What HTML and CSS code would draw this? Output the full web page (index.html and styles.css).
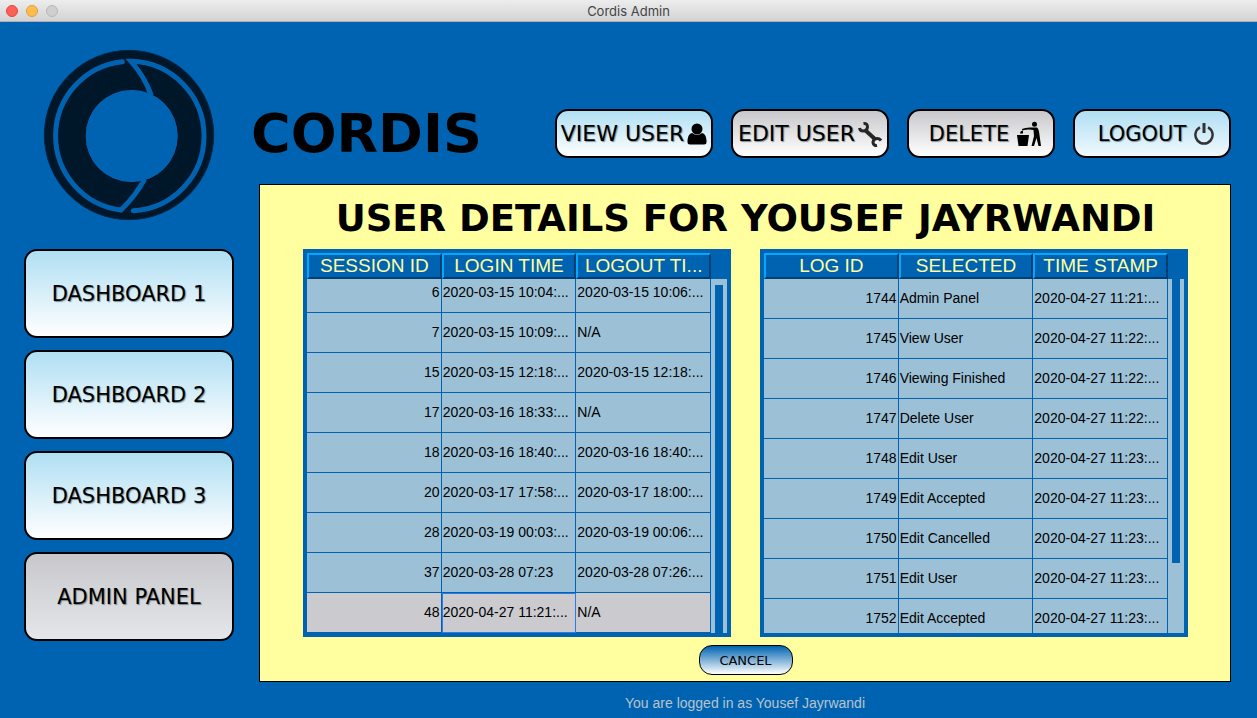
FILE: index.html
```html
<!DOCTYPE html>
<html lang="en">
<head>
<meta charset="utf-8">
<title>Cordis Admin</title>
<link rel="stylesheet" href="styles.css">
</head>
<body>
<div class="titlebar">
  <div class="lights"><span class="light red"></span><span class="light amber"></span><span class="light off"></span></div>
  <span class="window-title">Cordis Admin</span>
</div>
<div class="app">
  <aside class="sidebar">
    <svg class="logo" viewBox="131 147 516 516" aria-label="Cordis logo">
      <circle cx="389" cy="405" r="254" fill="#001629" stroke="#00264a" stroke-width="3"/>
      <g fill="none" stroke="#0063b1" stroke-width="15" stroke-linecap="round">
        <path d="M369 185A224 224 0 0 0 365 630Q412 584 436 536"/>
        <path d="M402 632A224 224 0 0 0 614 408A224 224 0 0 0 395 184Q436 230 455 284"/>
      </g>
      <circle cx="397" cy="408" r="140" fill="#0063b1" stroke="#000f1e" stroke-width="3"/>
      <path d="M448 270L456 290M435 538L430 550" stroke="#0063b1" stroke-width="14"/>
    </svg>
    <nav class="nav">
      <button class="btn nav-btn">DASHBOARD 1</button>
      <button class="btn nav-btn">DASHBOARD 2</button>
      <button class="btn nav-btn">DASHBOARD 3</button>
      <button class="btn nav-btn current">ADMIN PANEL</button>
    </nav>
  </aside>
  <main class="main">
    <header class="header">
      <h1 class="brand">CORDIS</h1>
      <div class="actions">
        <button class="btn action snug">VIEW USER
          <svg width="20" height="22" viewBox="0 0 20 22"><circle cx="10" cy="6" r="5.5"/><path d="M5 10Q10 14 15 10Q19 11 19.500 17V19Q19.500 21.500 17 21.500H3Q.5 21.500.5 19V17Q1 11 5 10Z"/></svg>
        </button>
        <button class="btn action snug grey">EDIT USER
          <svg width="24" height="26" viewBox="0 0 24 26" fill="none" stroke="#262626"><path d="M7 9L17.500 18.500" stroke-width="4"/><path d="M5.500 2.500Q9.500 2 9.500 6Q9 10 5 10Q2 10 1.500 7" stroke-width="3"/><path d="M23 19.500Q20.500 16.500 17 18Q14 20 15.500 23Q16.500 25 19 24.500" stroke-width="3"/></svg>
        </button>
        <button class="btn action short grey">DELETE
          <svg width="24" height="26" viewBox="0 0 24 26"><circle cx="17.500" cy="3.300" r="2.500"/><path d="M0 14H12L10.500 25H1.500Z"/><path d="M3 12L4 10H6V12.500H3Z"/><path d="M5 8Q9 6 15 6.500H20Q22 8 22.500 14L24 25H21.500L19.500 17L17 25H14.500L17 15L16.500 9Q11 8 5 9.500Z"/></svg>
        </button>
        <button class="btn action logout">LOGOUT
          <svg width="20" height="22" viewBox="0 0 20 22" fill="none" stroke="#333" stroke-width="2.500"><path d="M6 4.300A8.600 8.600 0 1 0 14 4.300"/><path d="M10 0V10" stroke-width="3"/></svg>
        </button>
      </div>
    </header>
    <section class="panel">
      <h2 class="panel-title">USER DETAILS FOR YOUSEF JAYRWANDI</h2>
      <div class="tables">
        <div class="frame">
          <table class="grid scrolled">
            <thead><tr><th>SESSION ID</th><th>LOGIN TIME</th><th>LOGOUT TI...</th></tr></thead>
            <tbody>
              <tr><td>6</td><td>2020-03-15 10:04:...</td><td>2020-03-15 10:06:...</td></tr>
              <tr><td>7</td><td>2020-03-15 10:09:...</td><td>N/A</td></tr>
              <tr><td>15</td><td>2020-03-15 12:18:...</td><td>2020-03-15 12:18:...</td></tr>
              <tr><td>17</td><td>2020-03-16 18:33:...</td><td>N/A</td></tr>
              <tr><td>18</td><td>2020-03-16 18:40:...</td><td>2020-03-16 18:40:...</td></tr>
              <tr><td>20</td><td>2020-03-17 17:58:...</td><td>2020-03-17 18:00:...</td></tr>
              <tr><td>28</td><td>2020-03-19 00:03:...</td><td>2020-03-19 00:06:...</td></tr>
              <tr><td>37</td><td>2020-03-28 07:23</td><td>2020-03-28 07:26:...</td></tr>
              <tr class="selected"><td>48</td><td class="focused">2020-04-27 11:21:...</td><td>N/A</td></tr>
            </tbody>
          </table>
          <div class="track at-end"><div class="thumb"></div></div>
        </div>
        <div class="frame">
          <table class="grid">
            <thead><tr><th>LOG ID</th><th>SELECTED</th><th>TIME STAMP</th></tr></thead>
            <tbody>
              <tr><td>1744</td><td>Admin Panel</td><td>2020-04-27 11:21:...</td></tr>
              <tr><td>1745</td><td>View User</td><td>2020-04-27 11:22:...</td></tr>
              <tr><td>1746</td><td>Viewing Finished</td><td>2020-04-27 11:22:...</td></tr>
              <tr><td>1747</td><td>Delete User</td><td>2020-04-27 11:22:...</td></tr>
              <tr><td>1748</td><td>Edit User</td><td>2020-04-27 11:23:...</td></tr>
              <tr><td>1749</td><td>Edit Accepted</td><td>2020-04-27 11:23:...</td></tr>
              <tr><td>1750</td><td>Edit Cancelled</td><td>2020-04-27 11:23:...</td></tr>
              <tr><td>1751</td><td>Edit User</td><td>2020-04-27 11:23:...</td></tr>
              <tr><td>1752</td><td>Edit Accepted</td><td>2020-04-27 11:23:...</td></tr>
            </tbody>
          </table>
          <div class="track at-start"><div class="thumb"></div></div>
        </div>
      </div>
      <button class="cancel">CANCEL</button>
    </section>
    <footer class="status">You are logged in as Yousef Jayrwandi</footer>
  </main>
</div>
</body>
</html>
```
FILE: styles.css
```css
* { box-sizing: border-box; }
body {
  margin: 0;
  min-height: 100vh;
  background: #0063b1;
  font-family: "Liberation Sans", Arial, sans-serif;
  color: #000;
}
.titlebar {
  display: grid;
  grid-template-columns: 1fr auto 1fr;
  align-items: center;
  height: 22px;
  padding: 0 6px;
  background: linear-gradient(#ededed, #d3d3d3);
  border-bottom: 1px solid #b0b0b0;
}
.lights { display: flex; gap: 8px; }
.light { width: 12px; height: 12px; border-radius: 50%; border: 1px solid; }
.red { background: #ff5f57; border-color: #e2463f; }
.amber { background: #ffbd4c; border-color: #e09e3e; }
.off { background: #cfcfcf; border-color: #b8b8b8; }
.window-title { font: 13px/20px Inter, sans-serif; color: #444; }

.app {
  display: grid;
  grid-template-columns: 210px 1fr;
  gap: 25px;
  padding: 0 26px 0 24px;
}
.sidebar { padding-top: 27px; }
.logo { display: block; width: 172px; height: 172px; margin: 0 auto 28px; }
.nav { display: flex; flex-direction: column; gap: 12px; }
.btn {
  display: flex;
  align-items: center;
  justify-content: center;
  border: 2px solid #000;
  border-radius: 13px;
  padding: 0;
  background: linear-gradient(#b0dff3, #fff);
  font: 21px "DejaVu Sans", Verdana, sans-serif;
  color: #000;
  text-shadow: 1px 1px 1px rgba(50, 75, 85, 0.6);
  white-space: nowrap;
}
.nav-btn { height: 89px; }
.grey { background: linear-gradient(#c8c8cc, #fff); }
.current { background: linear-gradient(#c8c8cc, #e4e6ea); }

.main { display: flex; flex-direction: column; min-width: 0; }
.header {
  display: flex;
  align-items: center;
  justify-content: space-between;
  height: 49px;
  margin: 87px 0 26px;
}
.brand {
  margin: 0 0 0 -8px;
  font: bold 54px/48px "DejaVu Sans", Verdana, sans-serif;
}
.actions { display: flex; gap: 18px; }
.action { width: 158px; height: 49px; gap: 8px; padding-left: 8px; }
.snug { gap: 3px; padding-left: 0; font-size: 22px; }
.short { width: 148px; }
.logout { background: linear-gradient(#b0dff3, #f0f9fe); }

.panel {
  display: flex;
  flex-direction: column;
  align-items: center;
  padding: 4px 42px 6px 43px;
  background: #ffff9f;
  border: 1px solid #000;
}
.panel-title {
  margin: 0;
  font: bold 37px/60px "DejaVu Sans", Verdana, sans-serif;
  white-space: nowrap;
}
.tables {
  display: grid;
  grid-template-columns: 1fr 1fr;
  gap: 29px;
  width: 100%;
}
.frame { display: flex; background: #0063b1; border: 4px solid #0063b1; }
.grid { display: block; flex: 1; min-width: 0; }
.grid thead { display: block; }
.grid tr { display: grid; grid-template-columns: 1fr 1fr 1fr; flex: none; }
.grid th {
  height: 26px;
  padding: 0;
  border: 2px solid;
  border-color: #00a8ff #003d70 #003d70 #00a8ff;
  font: 19px/22px "Liberation Sans", Arial, sans-serif;
  color: #ffff9f;
  text-align: center;
  white-space: nowrap;
}
.grid tbody {
  display: flex;
  flex-direction: column;
  height: 354px;
  overflow: hidden;
}
.scrolled tbody { justify-content: flex-end; }
.grid td {
  height: 40px;
  padding: 0 1px;
  border-right: 1px solid #0063b1;
  border-bottom: 1px solid #0063b1;
  background: #9cc1d6;
  font-size: 14px;
  line-height: 39px;
  white-space: nowrap;
  overflow: hidden;
}
.grid td:first-child { text-align: right; }
.grid .selected td { background: #cacacf; }
.grid .selected .focused { outline: 1px solid #2d7be8; outline-offset: -1px; }
.track {
  display: flex;
  width: 16px;
  margin-top: 26px;
  padding: 0 4px;
  background: #9cc1d6;
}
.thumb { flex: 1; background: #0063b1; }
.at-end { padding-top: 6px; }
.at-start { padding-bottom: 70px; }
.cancel {
  width: 94px;
  height: 30px;
  margin-top: 8px;
  padding: 0;
  border: 1px solid #000;
  border-radius: 13px;
  background: linear-gradient(#0063b1, #fff);
  font: 13px "DejaVu Sans", Verdana, sans-serif;
  color: #000;
}
.status {
  padding-top: 11px;
  font-size: 14px;
  line-height: 20px;
  text-align: center;
  color: #b9c3cc;
}
```
